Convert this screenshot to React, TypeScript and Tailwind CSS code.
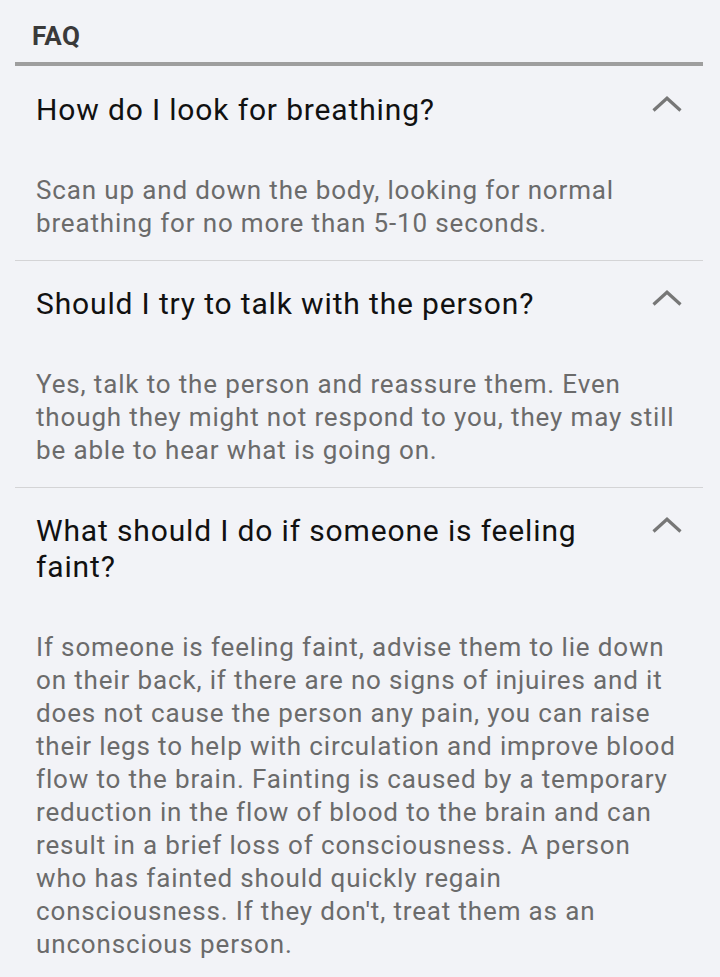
const faqs = [
  {
    q: "How do I look for breathing?",
    a: "Scan up and down the body, looking for normal breathing for no more than 5-10 seconds.",
  },
  {
    q: "Should I try to talk with the person?",
    a: "Yes, talk to the person and reassure them. Even though they might not respond to you, they may still be able to hear what is going on.",
  },
  {
    q: "What should I do if someone is feeling faint?",
    a: "If someone is feeling faint, advise them to lie down on their back, if there are no signs of injuires and it does not cause the person any pain, you can raise their legs to help with circulation and improve blood flow to the brain. Fainting is caused by a temporary reduction in the flow of blood to the brain and can result in a brief loss of consciousness. A person who has fainted should quickly regain consciousness. If they don't, treat them as an unconscious person.",
  },
];

const ChevronUp = () => (
  <svg width="30" height="16" viewBox="0 0 30 16" className="mt-[4px] shrink-0">
    <polyline
      points="1.5,14.5 15,2.2 28.5,14.5"
      fill="none"
      stroke="#777777"
      strokeWidth="3.2"
    />
  </svg>
);

const App = () => {
  return (
    <main
      className="min-h-screen bg-[#f2f3f7] pl-[15px] pr-[17px]"
      style={{ fontFamily: "Roboto, 'Noto Sans', sans-serif" }}
    >
      <h1 className="pl-[17px] pt-[21px] text-[26px] leading-[30px] font-bold tracking-[0.4px] text-[#3a3a3a]">
        FAQ
      </h1>
      <div className="mt-[11px] h-[4px] bg-[#9e9e9e]" />

      <div className="mt-px">
        {faqs.map((item) => (
          <section
            key={item.q}
            className="border-b border-[#d4d4d6] px-[21px] pt-[25px] pb-[20px]"
          >
            <div className="flex items-start justify-between gap-[40px]">
              <h2 className="flex-1 text-[30px] leading-[36px] tracking-[0.85px] text-[#111111]">
                {item.q}
              </h2>
              <ChevronUp />
            </div>
            <p className="mt-[46px] text-[26px] leading-[33px] tracking-[0.85px] text-[#6b6b6b]">
              {item.a}
            </p>
          </section>
        ))}
      </div>
    </main>
  );
};

export default App;
